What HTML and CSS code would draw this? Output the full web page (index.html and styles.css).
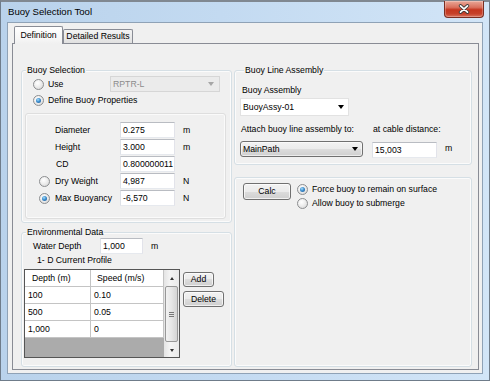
FILE: index.html
```html
<!DOCTYPE html>
<html>
<head>
<meta charset="utf-8">
<title>Buoy Selection Tool</title>
<link rel="stylesheet" href="styles.css">
</head>
<body>
<div class="window">
  <div class="titlebar">
    <span class="title">Buoy Selection Tool</span>
    <div class="close">
      <svg width="12" height="10" viewBox="0 0 12 10"><path d="M2.5 1.8 L9.5 8.2 M9.5 1.8 L2.5 8.2" stroke="#3b3b3b" stroke-width="3.4" stroke-linecap="round"/><path d="M2.5 1.8 L9.5 8.2 M9.5 1.8 L2.5 8.2" stroke="#ffffff" stroke-width="1.7" stroke-linecap="round"/></svg>
    </div>
  </div>
  <div class="client">
    <div class="tabs">
      <div class="tab active">Definition</div>
      <div class="tab">Detailed Results</div>
    </div>
    <div class="tabpanel">
      <div class="col col-left">
        <div class="group group-buoy">
          <div class="group-title">Buoy Selection</div>
          <div class="row row-use">
            <span class="radio"></span><span class="lbl">Use</span>
            <div class="combo combo-disabled"><span class="combo-text">RPTR-L</span><span class="arrow arrow-gray"></span></div>
          </div>
          <div class="row row-define">
            <span class="radio checked"></span><span class="lbl">Define Buoy Properties</span>
          </div>
          <div class="props">
            <div class="prop"><span class="slot"></span><span class="plabel">Diameter</span><div class="textbox tb-prop">0.275</div><span class="unit">m</span></div>
            <div class="prop"><span class="slot"></span><span class="plabel">Height</span><div class="textbox tb-prop">3.000</div><span class="unit">m</span></div>
            <div class="prop"><span class="slot"></span><span class="plabel plabel-cd">CD</span><div class="textbox tb-prop">0.800000011</div></div>
            <div class="prop"><span class="slot"><span class="radio"></span></span><span class="plabel">Dry Weight</span><div class="textbox tb-prop">4,987</div><span class="unit">N</span></div>
            <div class="prop"><span class="slot"><span class="radio checked"></span></span><span class="plabel">Max Buoyancy</span><div class="textbox tb-prop">-6,570</div><span class="unit">N</span></div>
          </div>
        </div>
        <div class="group group-env">
          <div class="group-title">Environmental Data</div>
          <div class="row row-water">
            <span class="wlabel">Water Depth</span><div class="textbox tb-water">1,000</div><span class="unit">m</span>
          </div>
          <div class="profile-label">1- D Current Profile</div>
          <div class="grid-row">
            <div class="grid">
              <div class="grid-table">
                <div class="grow ghead"><span class="c1">Depth (m)</span><span class="c2">Speed (m/s)</span></div>
                <div class="grow"><span class="c1">100</span><span class="c2">0.10</span></div>
                <div class="grow"><span class="c1">500</span><span class="c2">0.05</span></div>
                <div class="grow"><span class="c1">1,000</span><span class="c2">0</span></div>
                <div class="gempty"></div>
              </div>
              <div class="vscroll">
                <div class="sb-btn"><span class="sb-up"></span></div>
                <div class="sb-thumb"><span class="grip"></span></div>
                <div class="sb-btn sb-btn-down"><span class="sb-down"></span></div>
              </div>
            </div>
            <div class="grid-buttons">
              <div class="button btn-add">Add</div>
              <div class="button btn-delete">Delete</div>
            </div>
          </div>
        </div>
      </div>
      <div class="col col-right">
        <div class="group group-line">
          <div class="group-title">Buoy Line Assembly</div>
          <div class="line-label">Buoy Assembly</div>
          <div class="combo combo-white"><span class="combo-text">BuoyAssy-01</span><span class="arrow"></span></div>
          <div class="attach-labels"><span class="al1">Attach buoy line assembly to:</span><span class="al2">at cable distance:</span></div>
          <div class="attach-inputs">
            <div class="combo combo-button"><span class="combo-text">MainPath</span><span class="arrow"></span></div>
            <div class="textbox tb-dist">15,003</div>
            <span class="unit unit-dist">m</span>
          </div>
        </div>
        <div class="group group-calc">
          <div class="calc-row">
            <div class="button btn-calc">Calc</div>
            <div class="calc-options">
              <div class="opt"><span class="radio checked"></span><span class="lbl">Force buoy to remain on surface</span></div>
              <div class="opt"><span class="radio"></span><span class="lbl">Allow buoy to submerge</span></div>
            </div>
          </div>
        </div>
      </div>
    </div>
  </div>
</div>
</body>
</html>
```
FILE: styles.css
```css
* { box-sizing: border-box; }
html, body { margin: 0; padding: 0; }
body {
  width: 490px;
  height: 381px;
  overflow: hidden;
  background: #ffffff;
  font-family: "Liberation Sans", Arial, sans-serif;
  font-size: 8.7px;
  color: #000;
}

/* window frame */
.window {
  width: 490px;
  height: 381px;
  border: 1px solid #6f7c8a;
  border-top: 2px solid #808891;
  background: linear-gradient(to right, #b9d2eb 0%, #c3daf1 45%, #d2e5f7 100%);
  padding: 0 6px 6px 6px;
  display: flex;
  flex-direction: column;
}
.titlebar {
  height: 20px;
  display: flex;
  align-items: flex-start;
}
.title {
  font-size: 9.6px;
  line-height: 20px;
  margin-left: 1px;
  color: #000;
}
.close {
  margin-left: auto;
  margin-right: -1px;
  margin-top: -1px;
  width: 40px;
  height: 17px;
  border: 1px solid #7a2e22;
  border-top: none;
  border-radius: 0 0 4px 4px;
  background: linear-gradient(#e9a898 0%, #d9705d 40%, #c4361f 55%, #c6412a 80%, #d8735f 100%);
  display: flex;
  align-items: center;
  justify-content: center;
  box-shadow: inset 0 0 0 1px rgba(255,255,255,0.25);
}
.close svg { display: block; }

.client {
  flex: 1;
  background: #f0f0f0;
  border: 1px solid #8fa2b6;
  padding: 0 3px 3px 4px;
  display: flex;
  flex-direction: column;
}

/* tabs */
.tabs {
  height: 21px;
  margin-bottom: -1px;
  padding-left: 2px;
  display: flex;
  align-items: flex-end;
  position: relative;
  z-index: 1;
}
.tab {
  width: 70px;
  height: 14px;
  margin-bottom: 1px;
  border: 1px solid #898c95;
  border-bottom: none;
  border-radius: 2px 2px 0 0;
  background: linear-gradient(#f3f3f3, #e1e1e1);
  text-align: center;
  line-height: 12px;
}
.tab.active {
  width: 49px;
  height: 18px;
  margin-bottom: 0;
  background: linear-gradient(#ffffff, #f6f6f6 70%, #f0f0f0);
  line-height: 16px;
}
.tabpanel {
  flex: 1;
  border: 1px solid #898c95;
  background: #f0f0f0;
  padding: 26px 6px 2px 8px;
  display: flex;
  gap: 2px;
}
.col { display: flex; flex-direction: column; }
.col-left { width: 211px; }
.col-right { width: 238px; }

/* group boxes */
.group {
  border: 1px solid #d5dfe5;
  border-radius: 3px;
  box-shadow: inset 0 0 0 1px #fbfbfb;
}
.group-title {
  margin: -6px 0 0 4px;
  padding: 0 1px;
  width: max-content;
  height: 10px;
  line-height: 10px;
  background: #f0f0f0;
}
.group-buoy { height: 153px; }
.group-env { height: 135px; margin-top: 9px; }
.group-line { height: 95px; padding-left: 5px; }
.group-calc { height: 190px; margin-top: 12px; }

.row { display: flex; align-items: center; height: 16px; }
.row-use { margin-top: 1px; padding-left: 11px; padding-right: 11px; }
.row-define { padding-left: 11px; }
.lbl { margin-left: 4px; white-space: nowrap; }

/* radio buttons */
.radio {
  width: 11px;
  height: 11px;
  flex: none;
  border-radius: 50%;
  border: 1px solid #8c8e90;
  background: radial-gradient(circle at 40% 35%, #ffffff 0%, #f0f0f0 40%, #d2d2d2 100%);
  display: flex;
  align-items: center;
  justify-content: center;
}
.radio.checked::after {
  content: "";
  width: 5px;
  height: 5px;
  border-radius: 50%;
  background: radial-gradient(circle at 40% 35%, #a9def9 0%, #3d8fd0 45%, #1a4f8a 100%);
}

/* combos */
.combo {
  display: flex;
  align-items: center;
  white-space: nowrap;
}
.combo-text { padding-left: 2px; }
.combo-disabled {
  margin-left: auto;
  width: 110px;
  height: 16px;
  background: #ebebeb;
  border: 1px solid #d6d6d6;
  color: #8c8c8c;
}
.combo-disabled .arrow { margin-left: auto; margin-right: 5px; }
.arrow {
  width: 0;
  height: 0;
  border-left: 3.5px solid transparent;
  border-right: 3.5px solid transparent;
  border-top: 4px solid #000;
}
.arrow-gray { border-top-color: #a6a6a6; }
.combo-white {
  margin-top: 2px;
  width: 109px;
  height: 18px;
  background: #fff;
  border: 1px solid #e2e2e2;
}
.combo-white .arrow { margin-left: auto; margin-right: 4px; }
.combo-button {
  width: 123px;
  height: 16px;
  border: 1px solid #707070;
  border-radius: 3px;
  background: linear-gradient(#f2f2f2 0%, #ebebeb 50%, #dddddd 50%, #cfcfcf 100%);
  box-shadow: inset 0 0 0 1px rgba(255,255,255,0.6);
}
.combo-button .arrow { margin-left: auto; margin-right: 4px; }

/* textboxes */
.textbox {
  height: 16px;
  background: #fff;
  border: 1px solid;
  border-color: #b9bcc2 #e2e3ea #e6e9ee #dde1e7;
  padding: 0 2px;
  line-height: 14px;
  white-space: nowrap;
  overflow: hidden;
  flex: none;
}
.tb-prop { width: 55px; }
.tb-water { width: 43px; }
.tb-dist { width: 65px; margin-top: 1px; }
.unit { margin-left: 8px; }

/* buoy properties panel */
.props {
  margin: 5px 5px 0 3px;
  height: 106px;
  border: 1px solid #dedede;
  border-radius: 3px;
  box-shadow: inset 0 0 0 1px #fafafa;
  padding: 8px 0 0 13px;
  display: flex;
  flex-direction: column;
  gap: 1px;
}
.prop { display: flex; align-items: center; height: 16px; }
.slot { width: 16px; flex: none; display: flex; align-items: center; }
.plabel { width: 65px; white-space: nowrap; }
.plabel-cd { padding-left: 1px; }

/* environmental data */
.row-water { margin-top: 1px; padding-left: 11px; }
.wlabel { width: 67px; }
.profile-label { margin-top: 1px; padding-left: 15px; line-height: 11px; height: 11px; }
.grid-row { display: flex; margin-top: 3px; margin-left: 2px; }
.grid {
  width: 156px;
  height: 89px;
  border: 1px solid #555;
  display: flex;
}
.grid-table { width: 139px; display: flex; flex-direction: column; }
.grow {
  display: flex;
  height: 17px;
  border-bottom: 1px solid #c4c4c4;
  background: #fff;
}
.grow span {
  border-right: 1px solid #c4c4c4;
  padding-left: 3px;
  padding-top: 1px;
  line-height: 15px;
  white-space: nowrap;
}
.grow .c1 { width: 66px; }
.grow .c2 { width: 73px; }
.ghead .c1 { padding-left: 7px; }
.ghead .c2 { padding-left: 6px; }
.gempty { flex: 1; background: #ababab; }

.vscroll {
  width: 15px;
  display: flex;
  flex-direction: column;
  background: linear-gradient(to right, #e4e4e4, #f4f4f4 40%, #eaeaea);
}
.sb-btn {
  height: 16px;
  display: flex;
  align-items: center;
  justify-content: center;
}
.sb-btn-down { margin-top: auto; height: 14px; }
.sb-up {
  width: 0; height: 0;
  border-left: 2.5px solid transparent;
  border-right: 2.5px solid transparent;
  border-bottom: 3px solid #333;
}
.sb-down {
  width: 0; height: 0;
  border-left: 2.5px solid transparent;
  border-right: 2.5px solid transparent;
  border-top: 3px solid #333;
}
.sb-thumb {
  margin: 0 1px;
  height: 56px;
  border: 1px solid #989898;
  border-radius: 2px;
  background: linear-gradient(to right, #f2f2f2, #e6e6e6 50%, #d4d4d4);
  display: flex;
  align-items: center;
  justify-content: center;
}
.grip {
  width: 5px;
  height: 5px;
  border-top: 1px solid #777;
  border-bottom: 1px solid #777;
  position: relative;
}
.grip::after {
  content: "";
  display: block;
  margin-top: 1px;
  border-top: 1px solid #777;
}
.grid-buttons { margin-left: 3px; display: flex; flex-direction: column; }

/* buttons */
.button {
  border: 1px solid #707070;
  border-radius: 3px;
  background: linear-gradient(#f2f2f2 0%, #ebebeb 50%, #dddddd 50%, #cfcfcf 100%);
  box-shadow: inset 0 0 0 1px rgba(255,255,255,0.7);
  text-align: center;
  white-space: nowrap;
}
.btn-add { width: 31px; height: 15px; line-height: 13px; margin-top: 3px; }
.btn-delete { width: 41px; height: 16px; line-height: 14px; margin-top: 4px; }
.btn-calc { width: 48px; height: 17px; line-height: 15px; margin-top: 5px; flex: none; }

/* buoy line assembly */
.line-label { margin-top: 10px; margin-left: 2px; line-height: 11px; height: 11px; }
.attach-labels { display: flex; margin-top: 8px; line-height: 11px; height: 11px; }
.al1 { width: 132px; padding-left: 1px; white-space: nowrap; }
.al2 { padding-left: 1px; white-space: nowrap; }
.attach-inputs { display: flex; align-items: flex-start; margin-top: 6px; }
.attach-inputs .combo-button { margin-right: 9px; }
.unit-dist { line-height: 14px; margin-top: 0; }

/* calc */
.calc-row { display: flex; padding-left: 8px; }
.calc-options { margin-left: 6px; margin-top: 4px; display: flex; flex-direction: column; }
.opt { display: flex; align-items: center; height: 14px; }
```
